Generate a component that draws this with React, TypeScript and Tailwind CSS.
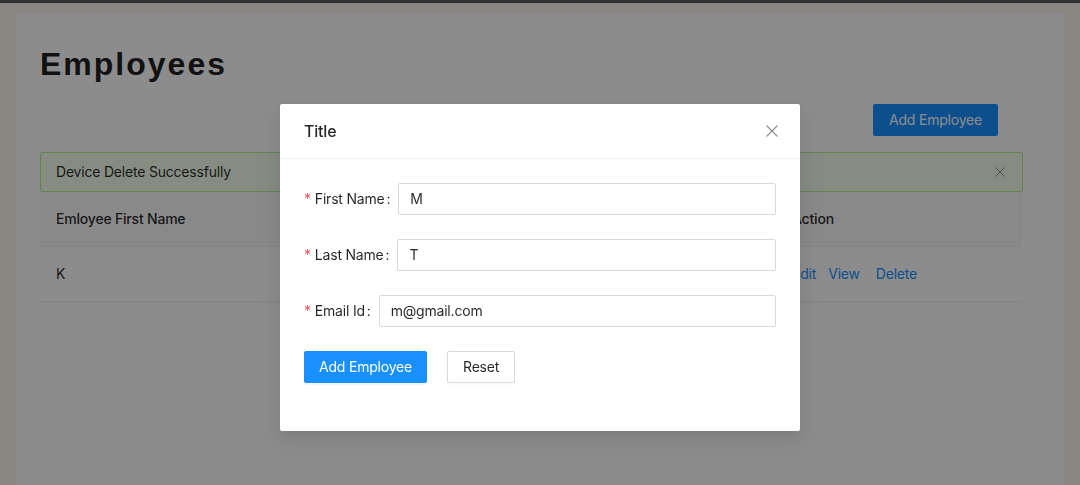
import React from 'react';

const columns = ['Emloyee First Name', 'Emloyee Last Name', 'Email Id', 'Action'];

function CloseIcon({ size, className }: { size: number; className?: string }) {
    return (
        <svg width={size} height={size} viewBox="0 0 12 12" className={className} fill="none" stroke="currentColor" strokeWidth="1.1">
            <path d="M0.5 0.5 L11.5 11.5 M11.5 0.5 L0.5 11.5" />
        </svg>
    );
}

function FormRow({ label, value }: { label: string; value: string }) {
    return (
        <div className="flex items-center mb-6">
            <label className="flex items-center text-sm text-black/85 whitespace-nowrap">
                <span className="text-[#ff4d4f] mr-1 text-sm leading-none">*</span>
                {label}
                <span className="ml-[2px] mr-2">:</span>
            </label>
            <div className="flex-1 h-8 border border-[#d9d9d9] rounded-[2px] px-[11px] flex items-center text-sm text-black/85">
                {value}
            </div>
        </div>
    );
}

export default function App() {
    return (
        <div className="h-screen overflow-hidden bg-[#fbf4ec] font-['Inter',sans-serif] tracking-[-0.2px] relative">
            <div className="h-[3px] bg-[#55585c]" />
            <div className="px-4 pt-[11px] h-full">
                <div className="bg-white h-full px-6 pt-[34px]">
                    <h1 className="font-['Liberation_Sans',Arial,sans-serif] text-[32px] leading-8 font-bold tracking-[2px] text-[#1f1f1f]">
                        Employees
                    </h1>
                    <div className="flex justify-end pr-[42px] mt-6">
                        <button className="h-8 w-[125px] bg-[#1890ff] text-white text-sm rounded-[2px]">Add Employee</button>
                    </div>
                    <div className="mt-4 mr-[17px]">
                        <div className="flex items-center justify-between border border-[#b7eb8f] bg-[#f6ffed] rounded-[2px] px-[15px] py-2 text-sm leading-[22px] text-black/85">
                            <span>Device Delete Successfully</span>
                            <CloseIcon size={10} className="text-black/45 mr-[2px]" />
                        </div>
                        <div className="grid grid-cols-[245px_245px_246px_1fr] bg-[#fafafa] border-b border-[#f0f0f0] text-sm font-medium text-black/85">
                            {columns.map(c => (
                                <div key={c} className="px-4 py-4 leading-[22px]">{c}</div>
                            ))}
                        </div>
                        <div className="grid grid-cols-[245px_245px_246px_1fr] border-b border-[#f0f0f0] text-sm text-black/85">
                            <div className="px-4 py-4 leading-[22px]">K</div>
                            <div className="px-4 py-4 leading-[22px]">K</div>
                            <div className="px-4 py-4 leading-[22px]">k@gmail.com</div>
                            <div className="px-4 py-4 leading-[22px] text-[#1890ff] flex">
                                <span>Edit</span>
                                <span className="ml-3">View</span>
                                <span className="ml-4">Delete</span>
                            </div>
                        </div>
                    </div>
                </div>
            </div>

            <div className="fixed inset-0 bg-black/45" />
            <div className="fixed inset-0 flex justify-center pt-[104px]">
                <div className="w-[520px] h-fit bg-white rounded-[2px] shadow-[0_3px_6px_-4px_rgba(0,0,0,0.12),0_6px_16px_0_rgba(0,0,0,0.08),0_9px_28px_8px_rgba(0,0,0,0.05)]">
                    <div className="flex items-center justify-between px-6 py-4 border-b border-[#f0f0f0]">
                        <span className="text-base leading-[22px] font-medium text-black/85">Title</span>
                        <CloseIcon size={12} className="text-black/45 mr-[-2px]" />
                    </div>
                    <div className="p-6">
                        <FormRow label="First Name" value="M" />
                        <FormRow label="Last Name" value="T" />
                        <FormRow label="Email Id" value="m@gmail.com" />
                        <div className="flex gap-5 mb-6">
                            <button className="h-8 px-[15px] bg-[#1890ff] text-white text-sm rounded-[2px] shadow-[0_2px_0_rgba(0,0,0,0.045)]">Add Employee</button>
                            <button className="h-8 px-[15px] bg-white border border-[#d9d9d9] text-black/85 text-sm rounded-[2px] shadow-[0_2px_0_rgba(0,0,0,0.016)]">Reset</button>
                        </div>
                    </div>
                </div>
            </div>
        </div>
    );
}
